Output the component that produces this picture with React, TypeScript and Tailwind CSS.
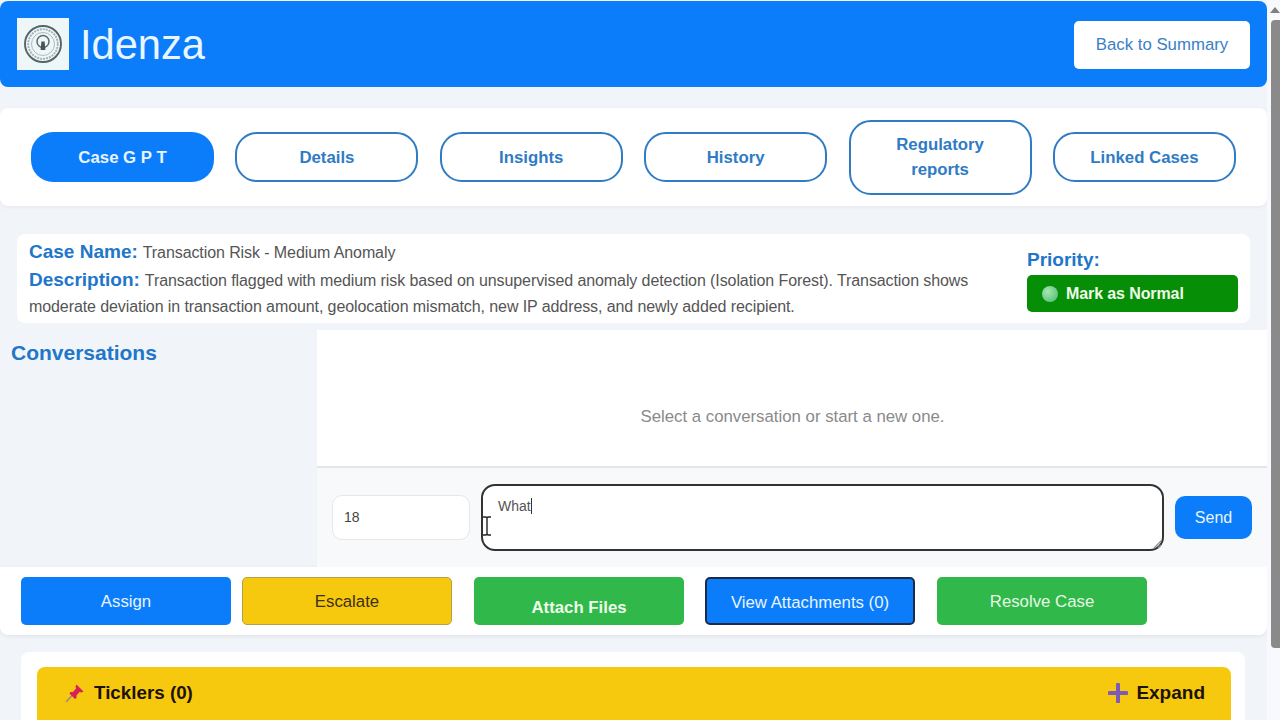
import React from "react";

const tabs = ["Details", "Insights", "History", "Regulatory reports", "Linked Cases"];

function Logo() {
  return (
    <div className="w-[52px] h-[52px] bg-[#eef6f8] flex items-center justify-center shrink-0">
      <svg width="42" height="42" viewBox="0 0 42 42" fill="none">
        <circle cx="21" cy="21" r="18" stroke="#556466" strokeWidth="1.9" />
        <circle cx="21" cy="21" r="14.8" stroke="#9db0b2" strokeWidth="1.8" strokeDasharray="2 1" />
        <circle cx="21" cy="21" r="11.5" stroke="#a9bbbd" strokeWidth="1" />
        <circle cx="21" cy="18.5" r="6" stroke="#5d6c6e" strokeWidth="1.5" />
        <path d="M19.4 18.5h3.2l.8 8.5h-4.8z" fill="#465456" />
      </svg>
    </div>
  );
}

function Pin() {
  return (
    <svg width="20" height="20" viewBox="0 0 20 20">
      <path d="M1.5 18.5 8 11.5" stroke="#9b8f7a" strokeWidth="1.6" strokeLinecap="round" />
      <path d="M11.5 1.5 18.5 8.5 16.5 9.5 14.5 9 11.5 12.5 11.5 15 10 16 4.5 10.5 5.5 9 8 9 11 5.5 10.5 3.5z" fill="#d81e5b" />
    </svg>
  );
}

function Plus() {
  return (
    <svg width="20" height="20" viewBox="0 0 20 20">
      <path d="M10 1.5v17M1.5 10h17" stroke="#7b5bb5" strokeWidth="4" strokeLinecap="round" />
    </svg>
  );
}

function Scrollbar() {
  return (
    <div className="w-[13px] shrink-0 bg-[#f7f9fc] flex flex-col items-end">
      <div className="mt-[7px] w-0 h-0 border-l-[5px] border-r-[5px] border-b-[6px] border-l-transparent border-r-transparent border-b-[#7f7f7f]" />
      <div className="mt-[7px] w-[9px] h-[628px] rounded-l-[4px] bg-[#8a8a8a]" />
    </div>
  );
}

export default function App() {
  return (
    <div className="relative h-[720px] w-[1280px] overflow-hidden flex bg-[#f1f5f9] font-['Liberation_Sans',Arial,sans-serif]">
      <div className="w-[1267px] shrink-0">
        <header className="mt-px h-[86px] rounded-lg bg-[#0b7dfb] flex items-center justify-between px-[17px]">
          <div className="flex items-center gap-[11px]">
            <Logo />
            <span className="pt-[2px] text-[41.6px] leading-none text-[#eaf6ff]">Idenza</span>
          </div>
          <button className="mt-[2px] w-[176px] h-[48px] rounded-[5px] bg-white text-[#3a80c9] text-[16.8px]">Back to Summary</button>
        </header>

        <nav className="mt-[21px] h-[98px] rounded-lg bg-white shadow-[0_1px_4px_rgba(0,0,0,0.06)] flex items-center pl-[31px] gap-[21.4px]">
          <button className="w-[183px] h-[50px] pt-px rounded-[22px] bg-[#0b7dfb] text-[#e8f4ff] font-bold text-[16.8px]">Case G P T</button>
          {tabs.map((t) => (
            <button
              key={t}
              className={
                t === "Regulatory reports"
                  ? "w-[183px] h-[75px] rounded-[22px] border-2 border-[#2f7bc4] bg-white text-[#2f7bc4] font-bold text-[16.8px] leading-[25px] px-8"
                  : "w-[183px] h-[50px] pt-px rounded-[22px] border-2 border-[#2f7bc4] bg-white text-[#2f7bc4] font-bold text-[16.8px]"
              }
            >
              {t}
            </button>
          ))}
        </nav>

        <section className="mt-[28px] ml-[17px] w-[1233px] h-[89px] rounded-lg bg-white flex px-[12px]">
          <div className="w-[998px] shrink-0 text-base text-[#555555] tracking-[-0.09px]">
            <div className="h-[31px] flex items-end leading-[24px]">
              <span>
                <b className="text-[19px] text-[#2176c9] mr-[5px] tracking-normal">Case Name:</b>Transaction Risk - Medium Anomaly
              </span>
            </div>
            <p className="leading-[26px] pt-[2px]">
              <b className="text-[19px] text-[#2176c9] mr-[5px] tracking-normal">Description:</b>Transaction flagged with medium risk based on unsupervised anomaly detection (Isolation Forest). Transaction shows moderate deviation in transaction amount, geolocation mismatch, new IP address, and newly added recipient.
            </p>
          </div>
          <div className="w-[211px] shrink-0 pt-[15px]">
            <div className="text-[19px] font-bold text-[#2176c9] leading-[21px]">Priority:</div>
            <div className="mt-[5px] h-[37px] rounded-[5px] bg-[#078e07] flex items-center pl-[15px] gap-[8px]">
              <span className="w-4 h-4 rounded-full bg-[radial-gradient(circle_at_35%_35%,#a6e8b0,#47b96e)]" />
              <span className="text-base font-bold text-[#eefbe9] tracking-[-0.1px]">Mark as Normal</span>
            </div>
          </div>
        </section>

        <section className="mt-[7px] h-[237px] flex">
          <aside className="w-[317px] shrink-0 pl-[11px] pt-[11px]">
            <h2 className="text-[21px] font-bold text-[#2176c9] leading-[24px]">Conversations</h2>
          </aside>
          <div className="flex-1 flex flex-col">
            <div className="h-[138px] pt-[38px] bg-white border-b-2 border-[#e3e6e8] flex items-center justify-center text-[16.8px] text-[#8a8a8a]">
              Select a conversation or start a new one.
            </div>
            <div className="flex-1 bg-[#f8f9fa] flex items-center pl-[15px] pr-[16px]">
              <div className="w-[138px] h-[45px] pb-px rounded-[10px] border border-[#e5e7eb] bg-white flex items-center pl-[11px] text-sm text-[#444444]">18</div>
              <div className="relative mb-px ml-[11px] w-[683px] h-[67px] rounded-[14px] border-2 border-[#333333] bg-white pl-[15px] pt-[11px] text-sm leading-[18px] text-[#555555]">
                <span className="border-r border-[#333333]">What</span>
                <svg className="absolute right-0 bottom-0" width="10" height="10" viewBox="0 0 10 10">
                  <path d="M9 2 2 9M9 6 6 9" stroke="#8a8a8a" strokeWidth="1.2" />
                </svg>
              </div>
              <button className="ml-[11px] w-[77px] h-[43px] rounded-[10px] bg-[#0b7dfb] text-[#e8f4ff] text-base">Send</button>
            </div>
          </div>
        </section>

        <section className="h-[68px] rounded-b-lg bg-white shadow-[0_1px_4px_rgba(0,0,0,0.08)] flex items-start pt-[10px] pl-[21px]">
          <button className="w-[210px] h-[48px] pt-px rounded-[5px] bg-[#0b7dfb] text-[#e8f4ff] text-[16.8px]">Assign</button>
          <button className="ml-[11px] w-[210px] h-[48px] pt-px rounded-[5px] border border-[#b5a04a] bg-[#f6c90f] text-[#3c2f14] text-[16.8px]">Escalate</button>
          <button className="ml-[22px] w-[210px] h-[48px] rounded-[5px] bg-[#30b94a] text-[#eefbe9] text-[16.8px] font-bold pt-[14px]">Attach Files</button>
          <button className="ml-[21px] w-[210px] h-[48px] rounded-[5px] border-2 border-[#1d2b4a] bg-[#0b7dfb] text-[#e8f4ff] text-[16.8px] pt-[3px]">View Attachments (0)</button>
          <button className="ml-[22px] w-[210px] h-[48px] pt-px rounded-[5px] bg-[#30b94a] text-[#e6f7e6] text-[16.8px]">Resolve Case</button>
        </section>

        <section className="mt-[17px] ml-[21px] w-[1224px] h-[120px] rounded-lg bg-white pt-[15px] pl-[16px] pr-[14px]">
          <div className="h-[80px] rounded-lg bg-[#f6c90f] flex items-start justify-between pt-[16px] pl-[28px] pr-[26px] text-[18.8px] font-bold text-[#1c1205] leading-[20px]">
            <div className="flex items-center gap-[9px]">
              <Pin />
              <span>Ticklers (0)</span>
            </div>
            <div className="flex items-center gap-[8px]">
              <Plus />
              <span className="text-[19px]">Expand</span>
            </div>
          </div>
        </section>
      </div>

      <Scrollbar />

      {/* text cursor over the message box */}
      <svg className="absolute left-[481px] top-[516px]" width="12" height="20" viewBox="0 0 12 20" fill="none">
        <path d="M2 1h3l1 1 1-1h3M6 2v16M2 19h3l1-1 1 1h3" stroke="#222222" strokeWidth="1.4" />
      </svg>
    </div>
  );
}
